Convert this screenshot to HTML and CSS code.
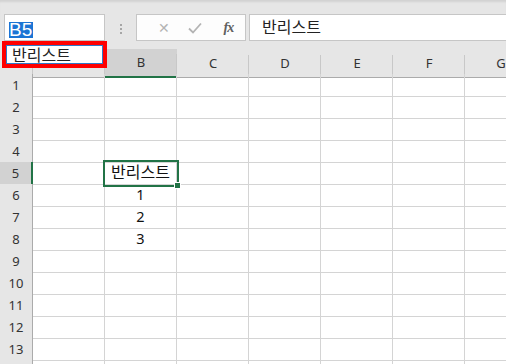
FILE: index.html
```html
<!DOCTYPE html>
<html lang="ko">
<head>
  <meta charset="UTF-8">
  <meta name="viewport" content="width=device-width, initial-scale=1.0">
  <title>Sheet</title>
  <link rel="stylesheet" href="styles.css">
</head>
<body>
  <div id="app">
    <div class="formula-bar">
      <div class="name-box"><span class="sel">B5</span></div>
      <div class="grip"><i></i><i></i><i></i></div>
      <div class="fx-group">
        <span class="fx-btn cancel">&#x2715;</span>
        <span class="fx-btn enter">
          <svg width="14" height="12" viewBox="0 0 14 12"><path d="M1 6.5 L5 10.5 L13 1.5" fill="none" stroke="#b4b4b4" stroke-width="1.8"/></svg>
        </span>
        <span class="fx-btn fx">fx</span>
      </div>
      <div class="formula-input">반리스트</div>
    </div>

    <div class="name-popup"><div class="name-field">반리스트</div></div>

    <div class="sheet">
      <div class="row head">
        <div class="corner"></div>
        <div class="ch"></div>
        <div class="ch active">B</div>
        <div class="ch">C</div>
        <div class="ch">D</div>
        <div class="ch">E</div>
        <div class="ch">F</div>
        <div class="ch">G</div>
      </div>
      <div class="row"><div class="rh">1</div><div class="c"></div><div class="c"></div><div class="c"></div><div class="c"></div><div class="c"></div><div class="c"></div><div class="c"></div></div>
      <div class="row"><div class="rh">2</div><div class="c"></div><div class="c"></div><div class="c"></div><div class="c"></div><div class="c"></div><div class="c"></div><div class="c"></div></div>
      <div class="row"><div class="rh">3</div><div class="c"></div><div class="c"></div><div class="c"></div><div class="c"></div><div class="c"></div><div class="c"></div><div class="c"></div></div>
      <div class="row"><div class="rh">4</div><div class="c"></div><div class="c"></div><div class="c"></div><div class="c"></div><div class="c"></div><div class="c"></div><div class="c"></div></div>
      <div class="row"><div class="rh active">5</div><div class="c"></div><div class="c selected">반리스트</div><div class="c"></div><div class="c"></div><div class="c"></div><div class="c"></div><div class="c"></div></div>
      <div class="row"><div class="rh">6</div><div class="c"></div><div class="c">1</div><div class="c"></div><div class="c"></div><div class="c"></div><div class="c"></div><div class="c"></div></div>
      <div class="row"><div class="rh">7</div><div class="c"></div><div class="c">2</div><div class="c"></div><div class="c"></div><div class="c"></div><div class="c"></div><div class="c"></div></div>
      <div class="row"><div class="rh">8</div><div class="c"></div><div class="c">3</div><div class="c"></div><div class="c"></div><div class="c"></div><div class="c"></div><div class="c"></div></div>
      <div class="row"><div class="rh">9</div><div class="c"></div><div class="c"></div><div class="c"></div><div class="c"></div><div class="c"></div><div class="c"></div><div class="c"></div></div>
      <div class="row"><div class="rh">10</div><div class="c"></div><div class="c"></div><div class="c"></div><div class="c"></div><div class="c"></div><div class="c"></div><div class="c"></div></div>
      <div class="row"><div class="rh">11</div><div class="c"></div><div class="c"></div><div class="c"></div><div class="c"></div><div class="c"></div><div class="c"></div><div class="c"></div></div>
      <div class="row"><div class="rh">12</div><div class="c"></div><div class="c"></div><div class="c"></div><div class="c"></div><div class="c"></div><div class="c"></div><div class="c"></div></div>
      <div class="row"><div class="rh">13</div><div class="c"></div><div class="c"></div><div class="c"></div><div class="c"></div><div class="c"></div><div class="c"></div><div class="c"></div></div>
      <div class="row"><div class="rh"></div><div class="c"></div><div class="c"></div><div class="c"></div><div class="c"></div><div class="c"></div><div class="c"></div><div class="c"></div></div>
    </div>
  </div>
</body>
</html>
```

FILE: styles.css
```css
html, body {
  margin: 0;
  padding: 0;
  width: 506px;
  height: 364px;
  overflow: hidden;
  background: #fff;
  font-family: "Noto Sans", "Noto Sans CJK KR", sans-serif;
  color: #222;
}
#app {
  position: relative;
  width: 506px;
  height: 364px;
  overflow: hidden;
}
.formula-bar {
  display: flex;
  align-items: flex-start;
  height: 49px;
  box-sizing: border-box;
  padding: 14px 0 0 4px;
  background: #e6e6e6;
  box-shadow: inset 0 3px 2px -1px #d2d2d2;
}
.name-box {
  display: flex;
  align-items: flex-start;
  width: 101px;
  height: 27px;
  box-sizing: border-box;
  background: #fff;
  border: 1px solid #c6c6c6;
  padding: 7px 0 0 4px;
}
.name-box .sel {
  display: block;
  background: #1b74d4;
  color: #fff;
  font-family: "Liberation Sans", sans-serif;
  font-size: 19px;
  line-height: 16px;
  height: 16px;
  padding: 0 1px 0 0;
}
.grip {
  width: 31px;
  display: flex;
  flex-direction: column;
  align-items: center;
  gap: 2px;
  padding-top: 10px;
}
.grip i {
  width: 2px;
  height: 2px;
  background: #a6a6a6;
}
.fx-group {
  width: 110px;
  height: 27px;
  box-sizing: border-box;
  background: #fdfdfd;
  border: 1px solid #c6c6c6;
  display: flex;
  align-items: center;
  padding-left: 13px;
}
.fx-btn {
  width: 35px;
  text-align: center;
  color: #b4b4b4;
}
.fx-btn.cancel {
  font-size: 14px;
  width: 30px;
}
.fx-btn.enter svg {
  display: block;
  margin: 0 auto;
}
.fx-btn.fx {
  font-family: "Liberation Serif", serif;
  font-style: italic;
  font-weight: bold;
  font-size: 14px;
  color: #606060;
  letter-spacing: -1px;
}
.formula-input {
  flex: 1;
  margin-left: 3px;
  height: 27px;
  box-sizing: border-box;
  background: #fff;
  border: 1px solid #c6c6c6;
  border-right: none;
  padding: 2px 0 0 12px;
  font-size: 16px;
  line-height: 20px;
}

/* name popup marked with red box */
.name-popup {
  position: absolute;
  left: 2px;
  top: 41px;
  width: 105px;
  height: 27px;
  box-sizing: border-box;
  border: 4px solid #f00;
  background: #fff;
  z-index: 5;
}
.name-field {
  height: 100%;
  box-sizing: border-box;
  border: 1px solid #2f78c8;
  padding: 1px 0 0 5px;
  font-size: 16px;
  line-height: 17px;
}

.sheet {
  background: #fff;
}
.row {
  display: grid;
  grid-template-columns: 33px repeat(7, 72px);
  height: 22px;
}
.row.head {
  height: 25px;
  background: #e6e6e6;
}
.corner, .ch {
  background: #e6e6e6 linear-gradient(#c8c8c8, #c8c8c8) no-repeat right bottom / 1px 22px;
  border-bottom: 1px solid #ababab;
  font-size: 13px;
  text-align: center;
  line-height: 28px;
  color: #333;
}
.ch.active {
  background-color: #d2d2d2;
  border-bottom: 2px solid #217346;
  line-height: 27px;
}
.rh {
  background: #e6e6e6;
  border-right: 1px solid #ababab;
  border-bottom: 1px solid #c8c8c8;
  font-size: 13px;
  text-align: center;
  line-height: 22px;
  color: #333;
}
.rh.active {
  background: #d2d2d2;
  border-right: 2px solid #217346;
}
.c {
  border-right: 1px solid #d4d4d4;
  border-bottom: 1px solid #d4d4d4;
  font-size: 14.5px;
  text-align: center;
  line-height: 21px;
  color: #111;
}
.c.selected {
  position: relative;
  outline: 2px solid #217346;
  z-index: 2;
  font-size: 16px;
}
.c.selected::after {
  content: "";
  position: absolute;
  right: -5px;
  bottom: -5px;
  width: 5px;
  height: 5px;
  background: #217346;
  border: 1px solid #fff;
}
```
